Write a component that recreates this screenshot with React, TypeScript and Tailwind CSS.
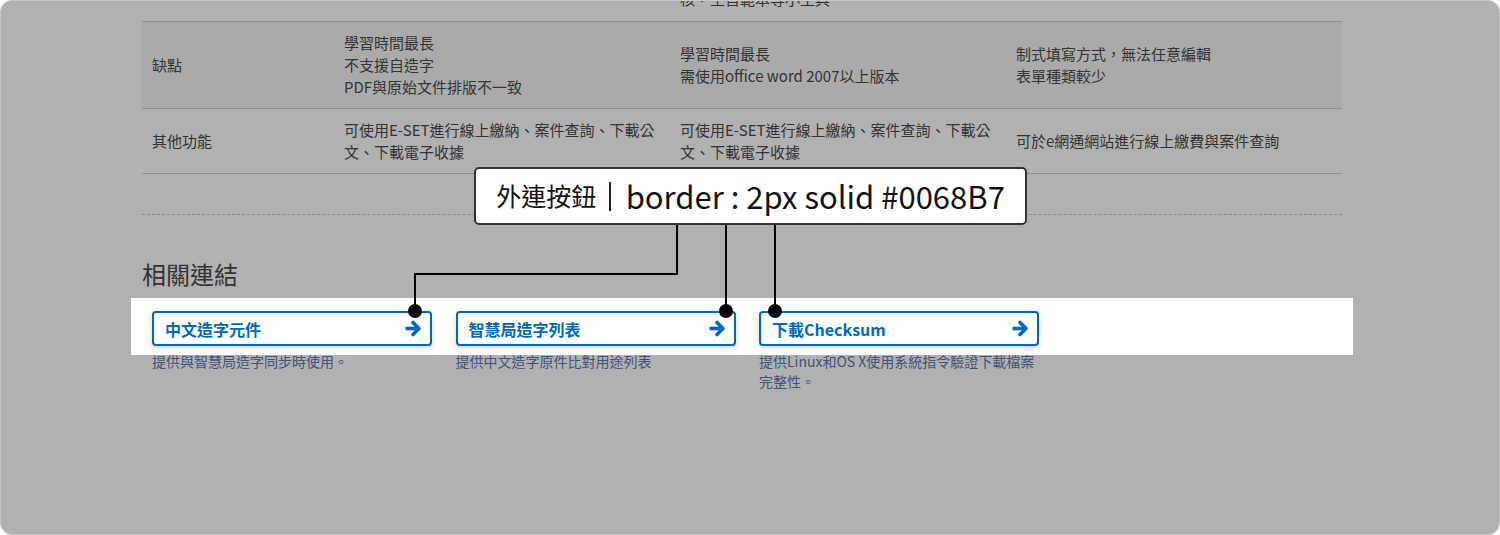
const font = { fontFamily: '"Noto Sans CJK TC", "Noto Sans", sans-serif' };

const rows = [
  {
    label: '缺點',
    cells: [
      ['學習時間最長', '不支援自造字', 'PDF與原始文件排版不一致'],
      ['學習時間最長', '需使用office word 2007以上版本'],
      ['制式填寫方式，無法任意編輯', '表單種類較少'],
    ],
    shade: true,
  },
  {
    label: '其他功能',
    cells: [
      ['可使用E-SET進行線上繳納、案件查詢、下載公文、下載電子收據'],
      ['可使用E-SET進行線上繳納、案件查詢、下載公文、下載電子收據'],
      ['可於e網通網站進行線上繳費與案件查詢'],
    ],
    shade: false,
  },
];

const links = [
  { title: '中文造字元件', desc: '提供與智慧局造字同步時使用。' },
  { title: '智慧局造字列表', desc: '提供中文造字原件比對用途列表' },
  { title: '下載Checksum', desc: '提供Linux和OS X使用系統指令驗證下載檔案完整性。' },
];

function Arrow() {
  return (
    <svg width="18" height="17" viewBox="0 0 18 17" fill="none" stroke="#0068B7" strokeWidth="3.6">
      <path d="M1.5 8.5 H14.5" />
      <path d="M9 2.5 L15 8.5 L9 14.5" strokeLinejoin="round" strokeLinecap="round" />
    </svg>
  );
}

export default function App() {
  return (
    <div className="w-[1500px] h-[535px] bg-white" style={font}>
      <div className="relative w-full h-full bg-[#b1b1b1] rounded-[12px] border border-[#c6c6c6] overflow-hidden">
        <div className="ml-[141px] w-[1200px]">
          {/* tail of the row above */}
          <div className="grid grid-cols-[192px_336px_336px_336px] mt-[-13px] pb-[11px] text-[15px] leading-[22px] text-[#333]">
            <div />
            <div />
            <div className="px-[10px]">核，主旨範本等小工具</div>
            <div />
          </div>

          {/* table */}
          <div className="border-t border-[#8e8e8e]">
            {rows.map(r => (
              <div
                key={r.label}
                className={`grid grid-cols-[192px_336px_336px_336px] border-b border-[#8e8e8e] text-[15px] leading-[22px] text-[#333] py-[10px] ${r.shade ? 'bg-[#aaaaaa]' : ''}`}
              >
                <div className="px-[10px] flex items-center">{r.label}</div>
                {r.cells.map((c, i) => (
                  <div key={i} className="px-[10px] flex flex-col justify-center">
                    {c.map((line, j) => (
                      <p key={j}>{line}</p>
                    ))}
                  </div>
                ))}
              </div>
            ))}
          </div>

          <div className="mt-[40px] border-t border-dashed border-[#8a8a8a]" />

          <h2 className="mt-[44px] text-[24px] leading-[30px] text-[#333]">相關連結</h2>
        </div>

        {/* highlighted buttons */}
        <div className="mt-[9px] ml-[130px] w-[1222px] bg-white pl-[21px] pt-[13px] pb-[9px] flex gap-[23.5px]">
          {links.map(l => (
            <a
              key={l.title}
              className="w-[280px] h-[35px] flex items-center justify-between pl-[11px] pr-[8px] border-2 border-[#0068B7] rounded-[4px] bg-white shadow-[0_2px_6px_rgba(0,0,0,0.18)] text-[#0068B7] text-[16px] font-bold"
            >
              <span>{l.title}</span>
              <Arrow />
            </a>
          ))}
        </div>
        <div className="relative mt-[-4px] ml-[151px] flex gap-[23.5px]">
          {links.map(l => (
            <p key={l.title} className="w-[280px] text-[14px] leading-[20px] text-[#41537a]">
              {l.desc}
            </p>
          ))}
        </div>

        {/* annotation connectors */}
        <svg className="absolute left-0 top-0" width="1500" height="535">
          <path d="M676 224 V273 H414 V310" fill="none" stroke="#000" strokeWidth="2" />
          <path d="M725 224 V310" fill="none" stroke="#000" strokeWidth="2" />
          <path d="M774 224 V310" fill="none" stroke="#000" strokeWidth="2" />
          <circle cx="414" cy="310" r="7" fill="#000" />
          <circle cx="725" cy="310" r="7" fill="#000" />
          <circle cx="774" cy="310" r="7" fill="#000" />
        </svg>

        {/* annotation label */}
        <div className="absolute left-[473px] top-[166px] w-[553px] h-[58px] bg-white border-2 border-[#333] rounded-[5px] flex items-center justify-center text-[#111] whitespace-nowrap">
          <span className="text-[25px]">外連按鈕</span>
          <span className="ml-[13px] mr-[15px] w-[1.5px] h-[29px] bg-[#222]" />
          <span className="text-[31px]">border : 2px solid #0068B7</span>
        </div>
      </div>
    </div>
  );
}
